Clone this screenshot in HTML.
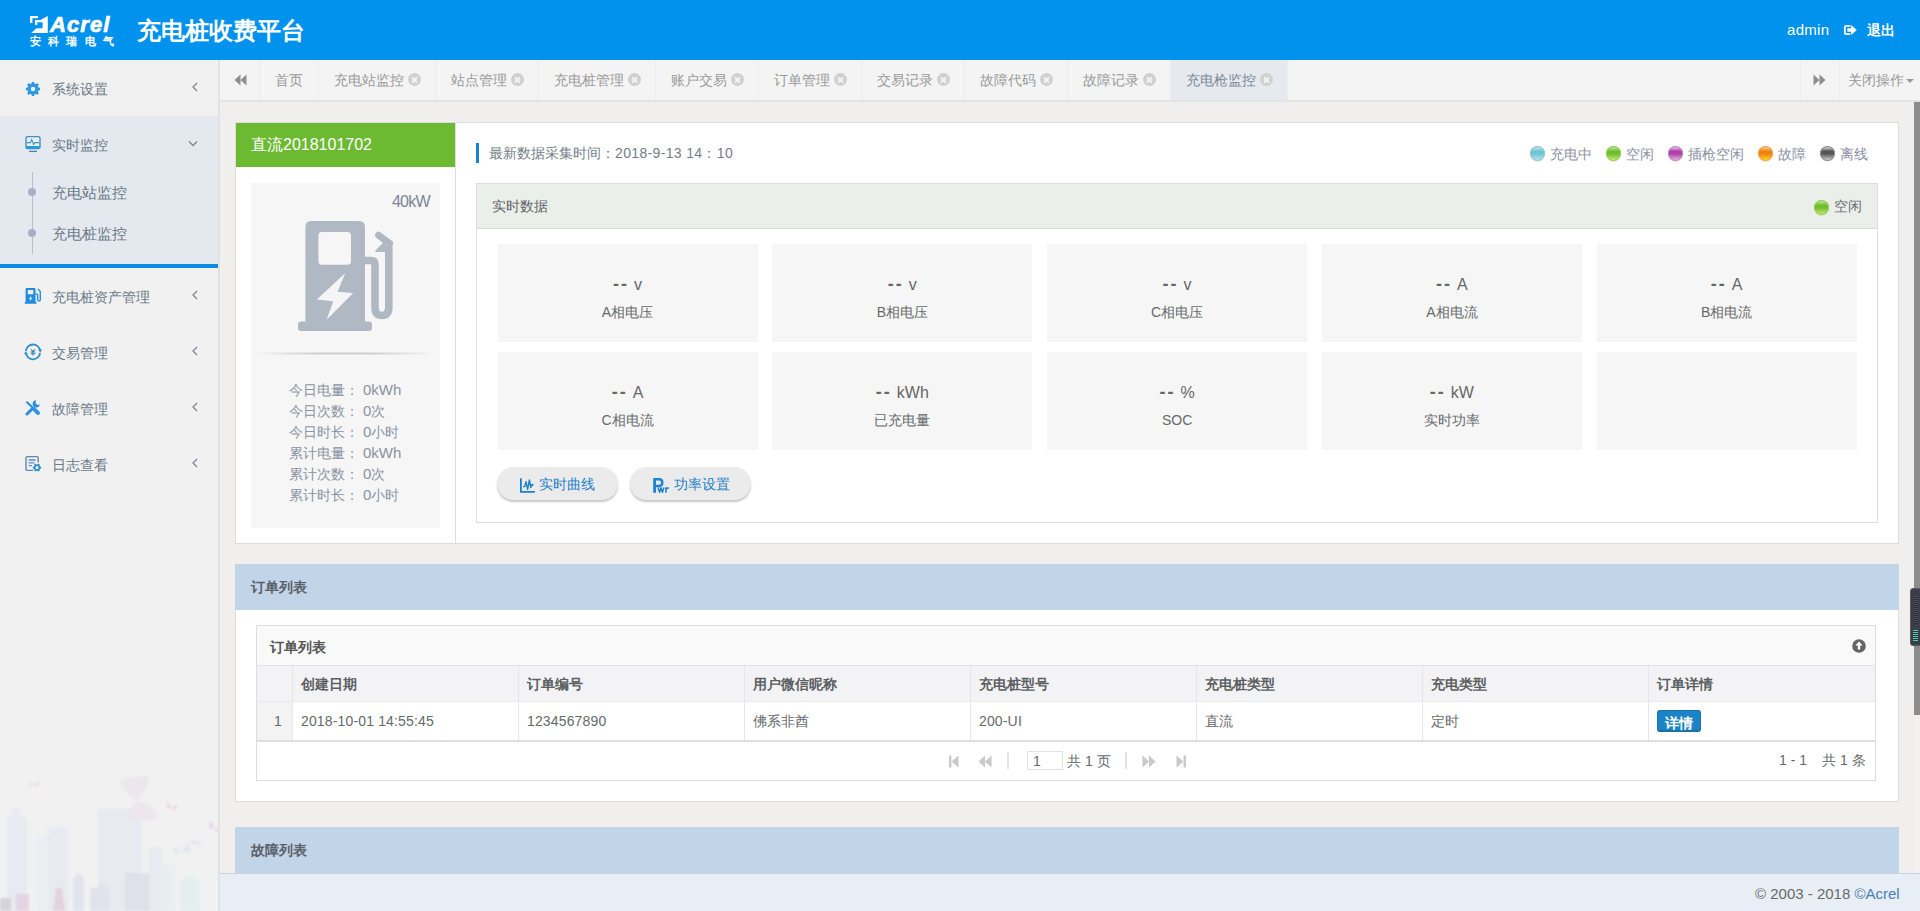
<!DOCTYPE html>
<html lang="zh"><head><meta charset="utf-8"><title>充电桩收费平台</title>
<style>
*{box-sizing:border-box;margin:0;padding:0}
html,body{width:1920px;height:911px;overflow:hidden}
body{font-family:"Liberation Sans",sans-serif;font-size:14px;color:#676a6c;background:#f0efee;position:relative}
.t{position:absolute;white-space:nowrap}
.b{position:absolute}
#hdr{position:absolute;left:0;top:0;width:1920px;height:60px;background:#0092ec}
#side{position:absolute;left:0;top:60px;width:218px;height:851px;background:#f1f1f1;overflow:hidden}
#sideborder{position:absolute;left:218px;top:60px;width:2px;height:851px;background:#e2e2e3}
#tabs{position:absolute;left:220px;top:60px;width:1700px;height:42px;background:#f4f4f5;border-bottom:2px solid #e2e4e8}
#foot{position:absolute;left:220px;top:873px;width:1700px;height:38px;background:#e8eef5;border-top:1px solid #c9d2dc}
.tab{position:absolute;top:60px;height:40px;border-right:1px solid #ececee}
.tx{position:absolute;top:73px;width:13px;height:13px;border-radius:50%;background:#d0d0d0}
.tx:before,.tx:after{content:"";position:absolute;left:3px;top:5.5px;width:7px;height:2px;background:#f4f4f5;transform:rotate(45deg)}
.tx:after{transform:rotate(-45deg)}
.card{position:absolute;width:260px;height:98px;background:#f6f6f6}
.card .v{position:absolute;left:0;width:100%;top:29px;text-align:center;font-size:16px;line-height:22px;color:#666;white-space:nowrap}
.card .v b{font-size:18px;letter-spacing:2px;margin-right:5px}
.card .l{position:absolute;left:0;width:100%;top:58px;text-align:center;font-size:14px;line-height:20px;color:#676a6c}
.dot{position:absolute;width:15px;height:15px;border-radius:50%}
.pbtn{position:absolute;top:467px;height:33px;border-radius:17px;background:#ebebeb;box-shadow:0 2px 2px rgba(0,0,0,.22)}
.th{position:absolute;top:666px;height:36px;background:#f3f3f5;border-right:1px solid #e6e6e6;border-bottom:1px solid #e9e9e9}
.td{position:absolute;top:702px;height:38px;background:#fff;border-right:1px solid #e6e6e6}
</style></head><body>

<div id="hdr">
<svg class="b" style="left:30px;top:15px" width="20" height="19" viewBox="0 0 20 19">
<path d="M0 1 H8 V3.2 H2.4 V8 H0 Z" fill="#fff"/>
<path d="M5 5 H10.5 L17.8 1 V18 H1.2 L6.5 13.2 H12.6 V7.2 H7.3 V10 H5 Z" fill="#fff"/>
</svg>
<div class="t " style="left:50px;top:12px;font-size:22px;line-height:26px;color:#fff;font-weight:bold;font-style:italic;letter-spacing:1.1px;-webkit-text-stroke:0.7px #fff;">Acrel</div>
<div class="t " style="left:30px;top:35px;font-size:11px;line-height:13px;color:#fff;font-weight:bold;letter-spacing:7.2px;">安科瑞电气</div>
<div class="t " style="left:137px;top:16px;font-size:24px;line-height:30px;color:#fff;font-weight:bold;">充电桩收费平台</div>
<div class="t " style="left:1787px;top:20px;font-size:15px;line-height:20px;color:#fff;letter-spacing:0.3px;">admin</div>
<svg class="b" style="left:1843px;top:24px" width="15" height="12" viewBox="0 0 15 12">
<path d="M7.4 1.9 H3.4 Q1.8 1.9 1.8 3.5 V8.5 Q1.8 10.1 3.4 10.1 H7.4" fill="none" stroke="#fff" stroke-width="1.8"/>
<path d="M4.4 4.3 H8.2 V1 L13.8 6 L8.2 11 V7.8 H4.4 Z" fill="#fff"/></svg>
<div class="t " style="left:1867px;top:21px;font-size:14px;line-height:18px;color:#fff;font-weight:bold;">退出</div>
</div>
<div id="side">
<div class="b" style="left:0;top:56px;width:218px;height:148px;background:#e4e9ef"></div>
<div class="b" style="left:0;top:204px;width:218px;height:4px;background:#0a8de4"></div>
</div>
<div class="t " style="left:52px;top:80px;font-size:14px;line-height:18px;color:#6b7886;">系统设置</div>
<svg class="b" style="left:191px;top:82px" width="8" height="10" viewBox="0 0 8 10"><path d="M6 1 L2 5 L6 9" fill="none" stroke="#7d8794" stroke-width="1.3"/></svg>
<div class="t " style="left:52px;top:136px;font-size:14px;line-height:18px;color:#6b7886;">实时监控</div>
<div class="t " style="left:52px;top:288px;font-size:14px;line-height:18px;color:#6b7886;">充电桩资产管理</div>
<svg class="b" style="left:191px;top:290px" width="8" height="10" viewBox="0 0 8 10"><path d="M6 1 L2 5 L6 9" fill="none" stroke="#7d8794" stroke-width="1.3"/></svg>
<div class="t " style="left:52px;top:344px;font-size:14px;line-height:18px;color:#6b7886;">交易管理</div>
<svg class="b" style="left:191px;top:346px" width="8" height="10" viewBox="0 0 8 10"><path d="M6 1 L2 5 L6 9" fill="none" stroke="#7d8794" stroke-width="1.3"/></svg>
<div class="t " style="left:52px;top:400px;font-size:14px;line-height:18px;color:#6b7886;">故障管理</div>
<svg class="b" style="left:191px;top:402px" width="8" height="10" viewBox="0 0 8 10"><path d="M6 1 L2 5 L6 9" fill="none" stroke="#7d8794" stroke-width="1.3"/></svg>
<div class="t " style="left:52px;top:456px;font-size:14px;line-height:18px;color:#6b7886;">日志查看</div>
<svg class="b" style="left:191px;top:458px" width="8" height="10" viewBox="0 0 8 10"><path d="M6 1 L2 5 L6 9" fill="none" stroke="#7d8794" stroke-width="1.3"/></svg>
<svg class="b" style="left:188px;top:140px" width="10" height="8" viewBox="0 0 10 8"><path d="M1 1.5 L5 5.5 L9 1.5" fill="none" stroke="#7d8794" stroke-width="1.3"/></svg>
<div class="b" style="left:32px;top:172px;width:1px;height:82px;background:#b9bdce"></div>
<div class="b" style="left:28px;top:188px;width:8px;height:8px;border-radius:50%;background:#a9aec4"></div>
<div class="b" style="left:28px;top:229px;width:8px;height:8px;border-radius:50%;background:#a9aec4"></div>
<div class="t " style="left:52px;top:183px;font-size:15px;line-height:20px;color:#6b7886;">充电站监控</div>
<div class="t " style="left:52px;top:224px;font-size:15px;line-height:20px;color:#6b7886;">充电桩监控</div>
<svg class="b" style="left:25px;top:81px" width="16" height="16" viewBox="0 0 16 16"><path d="M15.09 6.76 L15.09 9.24 L13.42 9.39 L12.82 10.85 L13.89 12.14 L12.14 13.89 L10.85 12.82 L9.39 13.42 L9.24 15.09 L6.76 15.09 L6.61 13.42 L5.15 12.82 L3.86 13.89 L2.11 12.14 L3.18 10.85 L2.58 9.39 L0.91 9.24 L0.91 6.76 L2.58 6.61 L3.18 5.15 L2.11 3.86 L3.86 2.11 L5.15 3.18 L6.61 2.58 L6.76 0.91 L9.24 0.91 L9.39 2.58 L10.85 3.18 L12.14 2.11 L13.89 3.86 L12.82 5.15 L13.42 6.61 Z M10.30 8.00 A2.3 2.3 0 1 0 5.70 8.00 A2.3 2.3 0 1 0 10.30 8.00 Z" fill="#2b98e0" fill-rule="evenodd"/></svg>
<svg class="b" style="left:24px;top:134px" width="18" height="19" viewBox="0 0 18 19">
<rect x="2" y="2.6" width="14" height="12" rx="1.6" fill="#dff3fb" stroke="#4d8bb8" stroke-width="1.4"/>
<path d="M2.2 12 H15.8 V13 Q15.8 14.6 14.2 14.6 H3.8 Q2.2 14.6 2.2 13 Z" fill="#2b9bd8"/>
<path d="M3 8.6 H6.4 L7.8 5.6 L9.6 10.4 L10.8 8.6 H15" fill="none" stroke="#4d8bb8" stroke-width="1.1"/>
<path d="M5 17.4 H13" stroke="#3b86c0" stroke-width="1.3"/></svg>
<svg class="b" style="left:24px;top:287px" width="18" height="18" viewBox="0 0 18 18">
<path d="M2.5 1 H10.5 Q11.5 1 11.5 2 V15 H12.5 V16.8 H0.8 V15 H1.6 V2 Q1.6 1 2.5 1 Z M3.8 3 V7.2 H9.3 V3 Z" fill="#208ce0" fill-rule="evenodd"/>
<path d="M7.4 8.6 L4.8 12 H6.4 L5.6 14.6 L8.4 11 H6.8 Z" fill="#e6f4ff"/>
<path d="M11.5 7 H12.6 Q13.6 7 13.6 8 V12.4 Q13.6 14 15 14 Q16.3 14 16.3 12.4 V4.6 L14 2" fill="none" stroke="#2a93e2" stroke-width="1.5"/></svg>
<svg class="b" style="left:24px;top:343px" width="18" height="18" viewBox="0 0 18 18">
<path d="M1.95 7.9 A7.1 7.1 0 0 1 16.05 7.6" fill="none" stroke="#2e8fcf" stroke-width="1.8"/>
<path d="M16.05 9.9 A7.1 7.1 0 0 1 1.95 10.2" fill="none" stroke="#2e8fcf" stroke-width="1.8"/>
<path d="M14.2 6.6 H18 L16.2 9.8 Z M3.8 11.2 H0 L1.8 8 Z" fill="#2e8fcf"/>
<path d="M7.2 6.2 L9 8.8 L10.8 6.2 M9 8.8 V12.4 M6.6 9 H11.4 M6.6 10.8 H11.4" fill="none" stroke="#3a7fb4" stroke-width="1.1"/></svg>
<svg class="b" style="left:24px;top:399px" width="18" height="18" viewBox="0 0 18 18">
<path d="M3 3.2 L9 9" stroke="#2b8fdc" stroke-width="2" stroke-linecap="round"/>
<path d="M9.6 9.6 L14 14" stroke="#2b98e0" stroke-width="4" stroke-linecap="round"/>
<path d="M7.4 10.6 L3 15" stroke="#2b8fdc" stroke-width="3" stroke-linecap="round"/>
<path d="M12 1.2 A3.6 3.6 0 1 0 15.8 5.4 L13.4 6 L11.6 4.2 Z" fill="#2b8fdc"/></svg>
<svg class="b" style="left:24px;top:455px" width="18" height="18" viewBox="0 0 18 18">
<path d="M9 15.4 H3.2 Q2 15.4 2 14.2 V2.8 Q2 1.6 3.2 1.6 H13 Q14.2 1.6 14.2 2.8 V7.6" fill="none" stroke="#5f86ad" stroke-width="1.4"/>
<path d="M4.6 5 H11.6 M4.6 7.8 H10.4 M4.6 10.6 H8" stroke="#5b8fc8" stroke-width="1.3"/>
<path d="M17.09 11.64 L17.09 13.56 L16.02 13.65 L15.42 14.69 L15.88 15.66 L14.21 16.62 L13.60 15.74 L12.40 15.74 L11.79 16.62 L10.12 15.66 L10.58 14.69 L9.98 13.65 L8.91 13.56 L8.91 11.64 L9.98 11.55 L10.58 10.51 L10.12 9.54 L11.79 8.58 L12.40 9.46 L13.60 9.46 L14.21 8.58 L15.88 9.54 L15.42 10.51 L16.02 11.55 Z M14.60 12.60 A1.6 1.6 0 1 0 11.40 12.60 A1.6 1.6 0 1 0 14.60 12.60 Z" fill="#2b8ad0" fill-rule="evenodd"/></svg>
<svg class="b" style="left:0;top:761px;filter:blur(0.8px);opacity:.9" width="218" height="150" viewBox="0 0 218 150">
<rect x="7" y="55" width="20" height="95" fill="#e6eaf2"/><rect x="12" y="46" width="8" height="10" fill="#e8ebf2"/>
<rect x="37" y="74" width="11" height="76" fill="#eaedf2"/><rect x="48" y="66" width="21" height="84" fill="#e7ebf1"/>
<rect x="98" y="48" width="43" height="102" fill="#e6eaee"/>
<rect x="149" y="86" width="13" height="64" fill="#e8e9f1"/>
<rect x="163" y="104" width="12" height="46" fill="#e5eeee"/>
<path d="M180 150 V120 L190 114 L200 120 V150 Z" fill="#e3eeee"/>
<path d="M73 150 V118 L78 111 L84 118 V150 Z" fill="#e0e3ee"/>
<path d="M90 150 V127 H98 L102 120 L106 127 H109 V150 Z" fill="#dfe1ec"/>
<rect x="125" y="112" width="24" height="38" fill="#dddfea"/>
<rect x="16" y="133" width="13" height="17" fill="#e3d3e3"/>
<path d="M53 150 L56 127 H62 L65 150 Z" fill="#e2cfe0"/>
<rect x="0" y="137" width="11" height="13" fill="#d3d1d7"/>
<path d="M137 40 Q122 30 120 22 Q126 14 150 15 Q146 30 137 40 Q152 42 159 56 Q146 62 128 58 Q128 46 137 40 Z" fill="#ece5ed"/>
<path d="M34 24 l-5 -4 l1 6 z M34 24 l5 -5 l-1 7 z" fill="#e8d8e6"/>
<path d="M172 46 l-6 -6 l1 8 z M172 46 l7 -2 l-5 6 z" fill="#ead6e8"/>
<path d="M196 82 l-4 -4 l0 6 z M196 82 l5 -2 l-3 5 z" fill="#ead6e8"/>
<path d="M214 66 l-4 -7 l-1 9 z M214 66 l4 2 l-2 4 z" fill="#e6cfe6"/>
<path d="M181 90 l-8 -5 l2 9 z M181 90 l8 -8 l1 10 z" fill="#e3e5f0"/>
</svg>
<div id="sideborder"></div>
<div id="tabs"></div>
<div class="tab" style="left:220px;width:40px"></div>
<svg class="b" style="left:234px;top:74px" width="13" height="12" viewBox="0 0 13 12"><path d="M6.5 0.5 V11.5 L0.5 6 Z M12.5 0.5 V11.5 L6.5 6 Z" fill="#8f8f8f"/></svg>
<div class="tab" style="left:260px;width:59px;"></div>
<div class="t " style="left:275px;top:71px;font-size:14px;line-height:18px;color:#999;">首页</div>
<div class="tab" style="left:319px;width:117px;"></div>
<div class="t " style="left:334px;top:71px;font-size:14px;line-height:18px;color:#999;">充电站监控</div>
<div class="tx" style="left:408px"></div>
<div class="tab" style="left:436px;width:103px;"></div>
<div class="t " style="left:451px;top:71px;font-size:14px;line-height:18px;color:#999;">站点管理</div>
<div class="tx" style="left:511px"></div>
<div class="tab" style="left:539px;width:117px;"></div>
<div class="t " style="left:554px;top:71px;font-size:14px;line-height:18px;color:#999;">充电桩管理</div>
<div class="tx" style="left:628px"></div>
<div class="tab" style="left:656px;width:103px;"></div>
<div class="t " style="left:671px;top:71px;font-size:14px;line-height:18px;color:#999;">账户交易</div>
<div class="tx" style="left:731px"></div>
<div class="tab" style="left:759px;width:103px;"></div>
<div class="t " style="left:774px;top:71px;font-size:14px;line-height:18px;color:#999;">订单管理</div>
<div class="tx" style="left:834px"></div>
<div class="tab" style="left:862px;width:103px;"></div>
<div class="t " style="left:877px;top:71px;font-size:14px;line-height:18px;color:#999;">交易记录</div>
<div class="tx" style="left:937px"></div>
<div class="tab" style="left:965px;width:103px;"></div>
<div class="t " style="left:980px;top:71px;font-size:14px;line-height:18px;color:#999;">故障代码</div>
<div class="tx" style="left:1040px"></div>
<div class="tab" style="left:1068px;width:103px;"></div>
<div class="t " style="left:1083px;top:71px;font-size:14px;line-height:18px;color:#999;">故障记录</div>
<div class="tx" style="left:1143px"></div>
<div class="tab" style="left:1171px;width:117px;background:#e6e9ee;"></div>
<div class="t " style="left:1186px;top:71px;font-size:14px;line-height:18px;color:#7b8898;">充电枪监控</div>
<div class="tx" style="left:1260px"></div>
<div class="tab" style="left:1800px;width:40px;border-left:1px solid #ececee"></div>
<svg class="b" style="left:1813px;top:74px" width="13" height="12" viewBox="0 0 13 12"><path d="M0.5 0.5 V11.5 L6.5 6 Z M6.5 0.5 V11.5 L12.5 6 Z" fill="#8f8f8f"/></svg>
<div class="t " style="left:1848px;top:71px;font-size:14px;line-height:18px;color:#999;">关闭操作</div>
<div class="b" style="left:1906px;top:79px;width:0;height:0;border-left:4px solid transparent;border-right:4px solid transparent;border-top:4px solid #999"></div>
<div class="b" style="left:235px;top:122px;width:1664px;height:422px;background:#fff;border:1px solid #dddddd"></div>
<div class="b" style="left:236px;top:123px;width:219px;height:44px;background:#6bba32"></div>
<div class="b" style="left:455px;top:123px;width:1px;height:420px;background:#dddddd"></div>
<div class="t " style="left:251px;top:134px;font-size:16px;line-height:22px;color:#fff;">直流2018101702</div>
<div class="b" style="left:251px;top:183px;width:189px;height:345px;background:#f6f6f6"></div>
<div class="t " style="left:392px;top:192px;font-size:16px;line-height:20px;color:#7d8694;letter-spacing:-0.8px;">40kW</div>
<svg class="b" style="left:296px;top:219px" width="100" height="114" viewBox="296 219 100 114">
<path d="M311 221 H359 Q365 221 365 227 V321.5 H369 Q372 321.5 372 324.5 V328 Q372 331 369 331 H301 Q298 331 298 328 V324.5 Q298 321.5 301 321.5 H305.4 V227 Q305.4 221 311 221 Z
M322 232 Q318.4 232 318.4 235.6 V261 Q318.4 264.8 322 264.8 H347.4 Q351 264.8 351 261 V235.6 Q351 232 347.4 232 Z" fill="#b0b9c3" fill-rule="evenodd"/>
<path d="M345.2 273.2 L316.8 299.6 L333.2 301.2 L326.6 319.8 L353.2 293 L337.6 291.8 Z" fill="#f5f5f5"/>
<path d="M364 260.5 H371 Q375 260.5 375 264.5 V307 Q375 315.5 382 315.5 Q388.8 315.5 388.8 307 V246" fill="none" stroke="#b0b9c3" stroke-width="7.6"/>
<path d="M389.6 243.6 L378.6 235.2" fill="none" stroke="#b0b9c3" stroke-width="7" stroke-linecap="round"/>
<path d="M386 240 L375.4 250.6 V252 H386 Z" fill="#b0b9c3"/>
</svg>
<div class="b" style="left:255px;top:352px;width:180px;height:3px;background:linear-gradient(90deg,rgba(246,246,246,1),rgba(246,246,246,0) 35%,rgba(246,246,246,0) 65%,rgba(246,246,246,1)),linear-gradient(#ececec,#cdcdcd 50%,#ededed)"></div>
<div class="t " style="left:289px;top:380px;font-size:14px;line-height:20px;color:#8a93a2;">今日电量：</div>
<div class="t " style="left:363px;top:380px;font-size:15px;line-height:20px;color:#8a93a2;">0kWh</div>
<div class="t " style="left:289px;top:401px;font-size:14px;line-height:20px;color:#8a93a2;">今日次数：</div>
<div class="t " style="left:363px;top:401px;font-size:15px;line-height:20px;color:#8a93a2;">0<span style="font-size:14px">次</span></div>
<div class="t " style="left:289px;top:422px;font-size:14px;line-height:20px;color:#8a93a2;">今日时长：</div>
<div class="t " style="left:363px;top:422px;font-size:15px;line-height:20px;color:#8a93a2;">0<span style="font-size:14px">小时</span></div>
<div class="t " style="left:289px;top:443px;font-size:14px;line-height:20px;color:#8a93a2;">累计电量：</div>
<div class="t " style="left:363px;top:443px;font-size:15px;line-height:20px;color:#8a93a2;">0kWh</div>
<div class="t " style="left:289px;top:464px;font-size:14px;line-height:20px;color:#8a93a2;">累计次数：</div>
<div class="t " style="left:363px;top:464px;font-size:15px;line-height:20px;color:#8a93a2;">0<span style="font-size:14px">次</span></div>
<div class="t " style="left:289px;top:485px;font-size:14px;line-height:20px;color:#8a93a2;">累计时长：</div>
<div class="t " style="left:363px;top:485px;font-size:15px;line-height:20px;color:#8a93a2;">0<span style="font-size:14px">小时</span></div>
<div class="b" style="left:476px;top:143px;width:3px;height:20px;background:#1686d2"></div>
<div class="t " style="left:489px;top:143px;font-size:14px;line-height:20px;color:#767d88;">最新数据采集时间：<span style="letter-spacing:0.35px">2018-9-13 14：10</span></div>
<div class="dot" style="left:1530px;top:146px;background:linear-gradient(#b4e2ea 0,#b4e2ea 12%,#6fc5d6 34%,#6fc5d6 52%,#b2e2ea 92%);box-shadow:inset 0 0 0 1px #9fc4cc,0 1px 1px rgba(0,0,0,.08)"></div>
<div class="t " style="left:1550px;top:144px;font-size:14px;line-height:20px;color:#8a8fa2;">充电中</div>
<div class="dot" style="left:1606px;top:146px;background:linear-gradient(#b4e090 0,#b4e090 12%,#6ebe2e 34%,#6ebe2e 52%,#c6e672 92%);box-shadow:inset 0 0 0 1px #98cc58,0 1px 1px rgba(0,0,0,.08)"></div>
<div class="t " style="left:1626px;top:144px;font-size:14px;line-height:20px;color:#8a8fa2;">空闲</div>
<div class="dot" style="left:1668px;top:146px;background:linear-gradient(#e4b0e0 0,#e4b0e0 12%,#b040a8 34%,#b040a8 52%,#dcaedc 92%);box-shadow:inset 0 0 0 1px #c08cc0,0 1px 1px rgba(0,0,0,.08)"></div>
<div class="t " style="left:1688px;top:144px;font-size:14px;line-height:20px;color:#8a8fa2;">插枪空闲</div>
<div class="dot" style="left:1758px;top:146px;background:linear-gradient(#f8c494 0,#f8c494 12%,#f08214 34%,#f08214 52%,#fad21e 92%);box-shadow:inset 0 0 0 1px #f0a648,0 1px 1px rgba(0,0,0,.08)"></div>
<div class="t " style="left:1778px;top:144px;font-size:14px;line-height:20px;color:#8a8fa2;">故障</div>
<div class="dot" style="left:1820px;top:146px;background:linear-gradient(#c4c4c4 0,#c4c4c4 12%,#555 34%,#555 52%,#cacaca 92%);box-shadow:inset 0 0 0 1px #929292,0 1px 1px rgba(0,0,0,.08)"></div>
<div class="t " style="left:1840px;top:144px;font-size:14px;line-height:20px;color:#8a8fa2;">离线</div>
<div class="b" style="left:476px;top:183px;width:1402px;height:340px;background:#fff;border:1px solid #dcdfdc"></div>
<div class="b" style="left:477px;top:184px;width:1400px;height:45px;background:#ebefea;border-bottom:1px solid #d9ddd9"></div>
<div class="t " style="left:492px;top:196px;font-size:14px;line-height:20px;color:#5e6266;">实时数据</div>
<div class="dot" style="left:1814px;top:200px;background:linear-gradient(#b4e090 0,#b4e090 12%,#6ebe2e 34%,#6ebe2e 52%,#c6e672 92%);box-shadow:inset 0 0 0 1px #98cc58,0 1px 1px rgba(0,0,0,.08)"></div>
<div class="t " style="left:1834px;top:196px;font-size:14px;line-height:20px;color:#6a6e72;">空闲</div>
<div class="card" style="left:497.5px;top:244px"><div class="v"><b>--</b>v</div><div class="l">A相电压</div></div>
<div class="card" style="left:772.3px;top:244px"><div class="v"><b>--</b>v</div><div class="l">B相电压</div></div>
<div class="card" style="left:1047.1px;top:244px"><div class="v"><b>--</b>v</div><div class="l">C相电压</div></div>
<div class="card" style="left:1321.9px;top:244px"><div class="v"><b>--</b>A</div><div class="l">A相电流</div></div>
<div class="card" style="left:1596.7px;top:244px"><div class="v"><b>--</b>A</div><div class="l">B相电流</div></div>
<div class="card" style="left:497.5px;top:352px"><div class="v"><b>--</b>A</div><div class="l">C相电流</div></div>
<div class="card" style="left:772.3px;top:352px"><div class="v"><b>--</b>kWh</div><div class="l">已充电量</div></div>
<div class="card" style="left:1047.1px;top:352px"><div class="v"><b>--</b>%</div><div class="l">SOC</div></div>
<div class="card" style="left:1321.9px;top:352px"><div class="v"><b>--</b>kW</div><div class="l">实时功率</div></div>
<div class="card" style="left:1596.7px;top:352px"></div>
<div class="pbtn" style="left:497px;width:121px"></div>
<div class="pbtn" style="left:630px;width:121px"></div>
<svg class="b" style="left:519px;top:477px" width="17" height="17" viewBox="0 0 17 17">
<path d="M1.9 1.2 V14.8 H15.8" fill="none" stroke="#1c80c8" stroke-width="1.8"/>
<path d="M4 9.6 H5.6 L7 4.6 L8.6 12.4 L10.4 3 L11.8 10.6 L13 7.4 L14.4 8.4" fill="none" stroke="#1c80c8" stroke-width="1.4" stroke-linejoin="round"/></svg>
<div class="t " style="left:539px;top:474px;font-size:14px;line-height:20px;color:#1c80c8;">实时曲线</div>
<svg class="b" style="left:652px;top:477px" width="20" height="17" viewBox="0 0 20 17">
<path d="M1.2 1 H4 V15.8 H1.2 Z" fill="#1c84d0"/>
<path d="M2.6 2.2 H7.2 Q10.3 2.2 10.3 5.6 Q10.3 9 7.2 9 H2.6" fill="none" stroke="#1c84d0" stroke-width="2.4"/>
<path d="M6 10.4 L7.6 15.2 L9 10.8 L10.4 15.2 L12 10.4" fill="none" stroke="#1c84d0" stroke-width="1.5" stroke-linejoin="round"/>
<path d="M14 10.2 V15.8 M14 12.6 Q14.4 10.8 17 11" fill="none" stroke="#1c84d0" stroke-width="1.6"/></svg>
<div class="t " style="left:674px;top:474px;font-size:14px;line-height:20px;color:#1c80c8;">功率设置</div>
<div class="b" style="left:235px;top:564px;width:1664px;height:238px;background:#fff;border:1px solid #dedede;border-top:0"></div>
<div class="b" style="left:235px;top:564px;width:1664px;height:46px;background:#c1d4e8"></div>
<div class="t " style="left:251px;top:577px;font-size:14px;line-height:20px;color:#5a6068;font-weight:bold;">订单列表</div>
<div class="b" style="left:256px;top:625px;width:1620px;height:156px;background:#fff;border:1px solid #dddddd"></div>
<div class="b" style="left:257px;top:626px;width:1618px;height:40px;background:#f9f9f9;border-bottom:1px solid #e2e2e2"></div>
<div class="t " style="left:270px;top:637px;font-size:14px;line-height:20px;color:#555;font-weight:bold;">订单列表</div>
<svg class="b" style="left:1852px;top:639px" width="14" height="14" viewBox="0 0 14 14"><circle cx="7" cy="7" r="6.8" fill="#646464"/><path d="M7 2.6 L10.6 6.6 H8.2 V10.6 H5.8 V6.6 H3.4 Z" fill="#fff"/></svg>
<div class="th" style="left:257px;width:36px"></div>
<div class="td" style="left:257px;width:36px;background:#f3f3f4"></div>
<div class="th" style="left:293px;width:226px;"></div>
<div class="td" style="left:293px;width:226px;"></div>
<div class="t " style="left:301px;top:674px;font-size:14px;line-height:20px;color:#5c5f62;font-weight:bold;">创建日期</div>
<div class="t " style="left:301px;top:711px;font-size:14px;line-height:20px;color:#676a6c;letter-spacing:0.15px;">2018-10-01 14:55:45</div>
<div class="th" style="left:519px;width:226px;"></div>
<div class="td" style="left:519px;width:226px;"></div>
<div class="t " style="left:527px;top:674px;font-size:14px;line-height:20px;color:#5c5f62;font-weight:bold;">订单编号</div>
<div class="t " style="left:527px;top:711px;font-size:14px;line-height:20px;color:#676a6c;letter-spacing:0.15px;">1234567890</div>
<div class="th" style="left:745px;width:226px;"></div>
<div class="td" style="left:745px;width:226px;"></div>
<div class="t " style="left:753px;top:674px;font-size:14px;line-height:20px;color:#5c5f62;font-weight:bold;">用户微信昵称</div>
<div class="t " style="left:753px;top:711px;font-size:14px;line-height:20px;color:#676a6c;letter-spacing:0.15px;">佛系非酋</div>
<div class="th" style="left:971px;width:226px;"></div>
<div class="td" style="left:971px;width:226px;"></div>
<div class="t " style="left:979px;top:674px;font-size:14px;line-height:20px;color:#5c5f62;font-weight:bold;">充电桩型号</div>
<div class="t " style="left:979px;top:711px;font-size:14px;line-height:20px;color:#676a6c;letter-spacing:0.15px;">200-UI</div>
<div class="th" style="left:1197px;width:226px;"></div>
<div class="td" style="left:1197px;width:226px;"></div>
<div class="t " style="left:1205px;top:674px;font-size:14px;line-height:20px;color:#5c5f62;font-weight:bold;">充电桩类型</div>
<div class="t " style="left:1205px;top:711px;font-size:14px;line-height:20px;color:#676a6c;letter-spacing:0.15px;">直流</div>
<div class="th" style="left:1423px;width:226px;"></div>
<div class="td" style="left:1423px;width:226px;"></div>
<div class="t " style="left:1431px;top:674px;font-size:14px;line-height:20px;color:#5c5f62;font-weight:bold;">充电类型</div>
<div class="t " style="left:1431px;top:711px;font-size:14px;line-height:20px;color:#676a6c;letter-spacing:0.15px;">定时</div>
<div class="th" style="left:1649px;width:226px;border-right:0;"></div>
<div class="td" style="left:1649px;width:226px;border-right:0;"></div>
<div class="t " style="left:1657px;top:674px;font-size:14px;line-height:20px;color:#5c5f62;font-weight:bold;">订单详情</div>
<div class="t " style="left:274px;top:711px;font-size:14px;line-height:20px;color:#676a6c;">1</div>
<div class="b" style="left:257px;top:740px;width:1618px;height:2px;background:#dedede"></div>
<div class="b" style="left:1657px;top:710px;width:44px;height:22px;border-radius:3px;background:#1c84c6;border:1px solid #1a70a8;border-bottom-width:2px"></div>
<div class="t " style="left:1665px;top:713px;font-size:14px;line-height:20px;color:#fff;font-weight:bold;">详情</div>
<svg class="b" style="left:949px;top:755px" width="10" height="13" viewBox="0 0 10 13"><path d="M0 0.5 H2.4 V12.5 H0 Z M9.5 0.5 V12.5 L2.6 6.5 Z" fill="#c9c9c9"/></svg>
<svg class="b" style="left:978px;top:755px" width="14" height="13" viewBox="0 0 14 13"><path d="M7 0.5 V12.5 L0.5 6.5 Z M13.5 0.5 V12.5 L7 6.5 Z" fill="#c9c9c9"/></svg>
<div class="b" style="left:1007px;top:752px;width:2px;height:17px;background:#e4e4e4"></div>
<div class="b" style="left:1027px;top:751px;width:36px;height:19px;background:#fff;border:1px solid #e2e2e2"></div>
<div class="t " style="left:1033px;top:751px;font-size:14px;line-height:20px;color:#676a6c;">1</div>
<div class="t " style="left:1067px;top:751px;font-size:14px;line-height:20px;color:#676a6c;">共 1 页</div>
<div class="b" style="left:1125px;top:752px;width:2px;height:17px;background:#e4e4e4"></div>
<svg class="b" style="left:1142px;top:755px" width="14" height="13" viewBox="0 0 14 13"><path d="M0.5 0.5 V12.5 L7 6.5 Z M7 0.5 V12.5 L13.5 6.5 Z" fill="#c9c9c9"/></svg>
<svg class="b" style="left:1176px;top:755px" width="10" height="13" viewBox="0 0 10 13"><path d="M7.6 0.5 H10 V12.5 H7.6 Z M0.5 0.5 V12.5 L7.4 6.5 Z" fill="#c9c9c9"/></svg>
<div class="t " style="left:1779px;top:750px;font-size:14px;line-height:20px;color:#676a6c;">1 - 1<span style="margin-left:15px">共 1 条</span></div>
<div class="b" style="left:235px;top:827px;width:1664px;height:46px;background:#c1d4e8"></div>
<div class="t " style="left:251px;top:840px;font-size:14px;line-height:20px;color:#5a6068;font-weight:bold;">故障列表</div>
<div class="b" style="left:1914px;top:102px;width:6px;height:771px;background:#f3f2f1"></div>
<div class="b" style="left:1914px;top:102px;width:6px;height:613px;background:#8c8c8c"></div>
<div class="b" style="left:1910px;top:588px;width:12px;height:58px;border-radius:3px;background:#3b3e48;border:1px solid #555a66"></div>
<div class="b" style="left:1913px;top:596px;width:5px;height:28px;background:repeating-linear-gradient(#4a4f5c 0,#4a4f5c 1px,#2c2f38 1px,#2c2f38 2px)"></div>
<div class="b" style="left:1913px;top:630px;width:5px;height:11px;background:repeating-linear-gradient(#4fd0b0 0,#4fd0b0 1px,#2c2f38 1px,#2c2f38 2px)"></div>
<div id="foot"></div>
<div class="t " style="left:1755px;top:884px;font-size:15px;line-height:20px;color:#676a6c;">© 2003 - 2018 <span style="color:#4a7fb4">©Acrel</span></div>
</body></html>
